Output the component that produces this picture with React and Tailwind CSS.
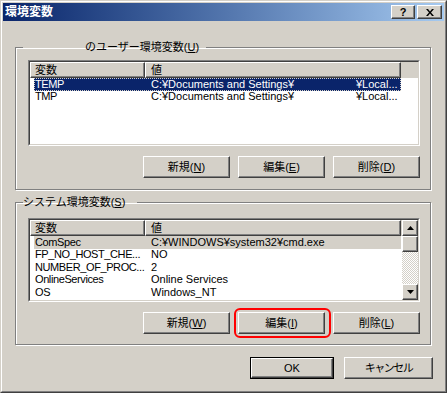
import React from "react";

function Btn({ children, className = "" }) {
  return (
    <div
      className={`h-[22px] bg-[#d4d0c8] border border-t-white border-l-white border-r-[#404040] border-b-[#404040] shadow-[inset_-1px_-1px_#808080] flex items-center justify-center ${className}`}
    >
      {children}
    </div>
  );
}

function HeadCell({ children, className = "" }) {
  return (
    <div
      className={`h-[16px] shrink-0 bg-[#d4d0c8] border border-t-white border-l-white border-r-[#404040] border-b-[#404040] shadow-[inset_-1px_-1px_#808080] flex items-center ${className}`}
    >
      {children}
    </div>
  );
}

function Row({ name, value, extra, kind }) {
  let cls = "";
  if (kind === "focus")
    cls =
      "bg-[#0a246a] text-white outline outline-1 outline-dotted outline-[#d4d0c8] -outline-offset-1";
  else if (kind === "sel") cls = "bg-[#d4d0c8]";
  return (
    <div className={`h-[12.5px] shrink-0 ml-[4px] w-[367px] flex items-center whitespace-nowrap ${cls}`}>
      <div className="w-[115px] shrink-0 pl-[1px] tracking-[-0.4px]">{name}</div>
      <div className="flex-1 pl-[2px] flex overflow-hidden">
        {extra ? (
          <>
            <span className="w-[205px] shrink-0">{value}</span>
            <span>{extra}</span>
          </>
        ) : (
          <span>{value}</span>
        )}
      </div>
    </div>
  );
}

function Header() {
  return (
    <div className="flex h-[16px] shrink-0 bg-[#d4d0c8]">
      <HeadCell className="w-[115px] pl-[4px]">変数</HeadCell>
      <HeadCell className="w-[256px] pl-[5px]">値</HeadCell>
      <div className="flex-1" />
    </div>
  );
}

function ListBox({ className = "", children }) {
  return (
    <div
      className={`ml-[12px] w-[392px] border border-t-[#808080] border-l-[#808080] border-r-white border-b-white ${className}`}
    >
      <div className="h-full border border-t-[#404040] border-l-[#404040] border-r-[#d4d0c8] border-b-[#d4d0c8] bg-white overflow-hidden flex">
        {children}
      </div>
    </div>
  );
}

function ScrollBtn({ down }) {
  return (
    <div className="h-[16px] w-[16px] shrink-0 bg-[#d4d0c8] border border-t-white border-l-white border-r-[#404040] border-b-[#404040] shadow-[inset_-1px_-1px_#808080] flex items-center justify-center">
      <svg width="7" height="4" viewBox="0 0 7 4">
        {down ? (
          <path d="M0 0h7L3.5 4z" fill="#000" />
        ) : (
          <path d="M0 4h7L3.5 0z" fill="#000" />
        )}
      </svg>
    </div>
  );
}

export default function App() {
  return (
    <div className="w-[447px] h-[393px] bg-[#d4d0c8] font-['Liberation_Sans','Noto_Sans_CJK_JP',sans-serif] text-[11px] leading-[13px] text-black">
      <div className="w-full h-full border border-t-[#d4d0c8] border-l-[#d4d0c8] border-r-[#404040] border-b-[#404040]">
        <div className="w-full h-full border border-t-white border-l-white border-r-[#808080] border-b-[#808080] p-px flex flex-col">
          {/* Title bar */}
          <div className="h-[18px] shrink-0 flex items-center bg-linear-to-r from-[#0a246a] to-[#a6caf0] pl-[2px] pr-[2px]">
            <span className="flex-1 text-white font-bold text-[12px] leading-[14px]">環境変数</span>
            <div className="flex gap-[2px]">
              <div className="w-[24px] h-[14px] bg-[#d4d0c8] border border-t-white border-l-white border-r-[#404040] border-b-[#404040] shadow-[inset_-1px_-1px_#808080] flex items-center justify-center font-bold text-[11px] leading-[11px]">
                ?
              </div>
              <div className="w-[25px] h-[14px] bg-[#d4d0c8] border border-t-white border-l-white border-r-[#404040] border-b-[#404040] shadow-[inset_-1px_-1px_#808080] flex items-center justify-center">
                <svg width="8" height="7" viewBox="0 0 8 7">
                  <path d="M0 0h2l2 2.5L6 0h2L5 3.5 8 7H6L4 4.5 2 7H0l3-3.5z" fill="#000" />
                </svg>
              </div>
            </div>
          </div>

          {/* User variables */}
          <fieldset className="ml-[12px] mt-[19px] w-[416px] border border-[#808080] shadow-[inset_1px_1px_#fff,1px_1px_#fff] pb-[11px]">
            <legend className="ml-[7px] leading-[14px] pl-[62px] pr-[7px]">
              のユーザー環境変数(<u>U</u>)
            </legend>
            <ListBox className="mt-[6px] h-[86px]">
              <div className="flex-1 flex flex-col min-w-0">
                <Header />
                <Row name="TEMP" value="C:¥Documents and Settings¥" extra="¥Local..." kind="focus" />
                <Row name="TMP" value="C:¥Documents and Settings¥" extra="¥Local..." />
              </div>
            </ListBox>
            <div className="mt-[10px] mr-[10px] flex justify-end gap-[8px]">
              <Btn className="w-[87px]">新規(<u>N</u>)</Btn>
              <Btn className="w-[87px]">編集(<u>E</u>)</Btn>
              <Btn className="w-[87px]">削除(<u>D</u>)</Btn>
            </div>
          </fieldset>

          {/* System variables */}
          <fieldset className="ml-[12px] mt-[5px] w-[416px] border border-[#808080] shadow-[inset_1px_1px_#fff,1px_1px_#fff] pb-[10px]">
            <legend className="ml-[7px] leading-[14px] pr-[12px]">
              システム環境変数(<u>S</u>)
            </legend>
            <ListBox className="mt-[9px] h-[84px]">
              <div className="flex-1 flex flex-col min-w-0 overflow-hidden">
                <Header />
                <Row name="ComSpec" value="C:¥WINDOWS¥system32¥cmd.exe" kind="sel" />
                <Row name="FP_NO_HOST_CHE..." value="NO" />
                <Row name="NUMBER_OF_PROC..." value="2" />
                <Row name="OnlineServices" value="Online Services" />
                <Row name="OS" value="Windows_NT" />
                <Row name="Path" value="C:¥WINDOWS¥system32;C:¥WINDOWS;C:¥WINDOWS¥System32¥Wbem" />
              </div>
              <div className="w-[16px] shrink-0 flex flex-col">
                <ScrollBtn />
                <div className="h-[16px] shrink-0 bg-[#d4d0c8] border border-t-white border-l-white border-r-[#404040] border-b-[#404040] shadow-[inset_-1px_-1px_#808080]" />
                <div className="flex-1 bg-[repeating-conic-gradient(#ffffff_0_25%,#d4d0c8_0_50%)] bg-[length:2px_2px]" />
                <ScrollBtn down />
              </div>
            </ListBox>
            <div className="mt-[10px] mr-[10px] flex justify-end gap-[8px]">
              <Btn className="w-[87px]">新規(<u>W</u>)</Btn>
              <div className="relative">
                <Btn className="w-[87px]">編集(<u>I</u>)</Btn>
                <div className="absolute -left-[4px] -right-[6px] -top-[4px] -bottom-[4px] border-2 border-[#ff0000] rounded-[6px]" />
              </div>
              <Btn className="w-[87px]">削除(<u>L</u>)</Btn>
            </div>
          </fieldset>

          {/* OK / Cancel */}
          <div className="mt-[12px] flex pl-[247px] gap-[10px]">
            <div className="w-[84px] h-[22px] border border-black">
              <div className="h-full bg-[#d4d0c8] border border-t-white border-l-white border-r-[#404040] border-b-[#404040] shadow-[inset_-1px_-1px_#808080] flex items-center justify-center">
                OK
              </div>
            </div>
            <Btn className="w-[89px] tracking-[-1.5px]">キャンセル</Btn>
          </div>
        </div>
      </div>
    </div>
  );
}
